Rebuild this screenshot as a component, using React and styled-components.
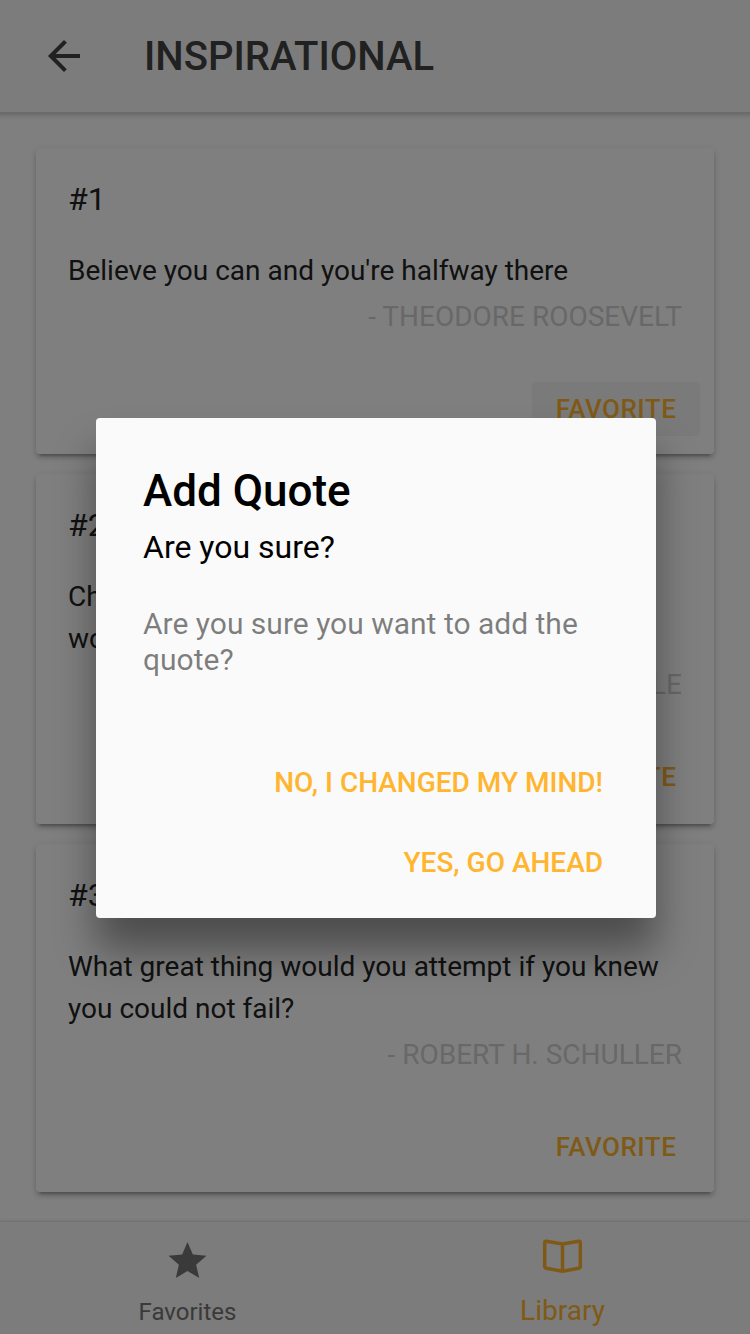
import React from "react";
import styled, { createGlobalStyle } from "styled-components";

const GlobalStyle = createGlobalStyle`
  * { box-sizing: border-box; }
  html, body { margin: 0; padding: 0; overflow: hidden; }
  body { font-family: Roboto, "Liberation Sans", sans-serif; background: #fff; color: #000; }
  h1, h2, h3, p { margin: 0; font-weight: 400; }
`;

const Screen = styled.div`
  position: relative;
  display: flex;
  flex-direction: column;
  width: 750px;
  height: 1334px;
  overflow: hidden;
`;

const Header = styled.header`
  position: relative;
  display: flex;
  align-items: center;
  flex: none;
  height: 112px;
  padding: 0 40px;
  gap: 56px;
  background: #f8f8f8;
  color: #424242;

  &::after {
    content: "";
    position: absolute;
    left: 0;
    right: 0;
    top: 100%;
    height: 8px;
    background: linear-gradient(rgba(0, 0, 0, 0.17), rgba(0, 0, 0, 0.14) 25%, rgba(0, 0, 0, 0.05) 60%, transparent);
  }
`;

const BackButton = styled.button`
  display: flex;
  width: 48px;
  height: 48px;
  padding: 0;
  border: 0;
  background: none;
  color: inherit;
`;

const PageTitle = styled.h1`
  padding-top: 2px;
  font-size: 40px;
  line-height: 48px;
  font-weight: 500;
  text-transform: uppercase;
`;

const Content = styled.main`
  flex: 1;
  min-height: 0;
  display: flex;
  flex-direction: column;
  gap: 20px;
  padding: 36px 36px 0;
`;

const Card = styled.article`
  display: flex;
  flex-direction: column;
  flex: none;
  height: ${(p) => p.$height}px;
  padding: 32px 14px 0 32px;
  border-radius: 4px;
  background: #fff;
  box-shadow: 0 4px 4px 0 rgba(0, 0, 0, 0.14), 0 6px 2px -4px rgba(0, 0, 0, 0.2),
    0 2px 10px 0 rgba(0, 0, 0, 0.12);
`;

const CardTitle = styled.h2`
  font-size: 32px;
  line-height: 38px;
  color: #222;
`;

const Quote = styled.p`
  margin: 32px 18px 0 0;
  font-size: 28px;
  line-height: 42px;
  color: #222;
`;

const Author = styled.p`
  margin: 4px 18px 0 0;
  font-size: 28px;
  line-height: 42px;
  text-align: right;
  text-transform: uppercase;
  color: #d1d1d1;
`;

const FavoriteButton = styled.button`
  align-self: flex-end;
  width: 168px;
  height: 54px;
  margin-top: 44px;
  padding: 0;
  border: 0;
  border-radius: 4px;
  font: 500 26px/54px Roboto, sans-serif;
  letter-spacing: 0.5px;
  text-transform: uppercase;
  color: #ffb52e;
  background: ${(p) => (p.$pressed ? "rgba(158, 158, 158, 0.1)" : "transparent")};
`;

const TabBar = styled.nav`
  display: flex;
  flex: none;
  height: 113px;
  background: #f8f8f8;
  border-top: 1px solid #e4e4e4;
  box-shadow: 0 -1px 3px rgba(0, 0, 0, 0.08);
`;

const Tab = styled.a`
  flex: 1;
  display: flex;
  flex-direction: column;
  align-items: center;
  padding-top: ${(p) => (p.$active ? 10 : 14)}px;
  gap: ${(p) => (p.$active ? 17 : 14)}px;
  color: ${(p) => (p.$active ? "#ffb52e" : "#747474")};
`;

const TabLabel = styled.span`
  font-size: ${(p) => (p.$active ? 28 : 24)}px;
  line-height: 28px;
`;

const Backdrop = styled.div`
  position: absolute;
  inset: 0;
  z-index: 2;
  display: flex;
  align-items: center;
  justify-content: center;
  background: rgba(0, 0, 0, 0.5);
`;

const Dialog = styled.section`
  width: 560px;
  height: 500px;
  margin: 2px 0 0 2px;
  border-radius: 4px;
  background: #fafafa;
  box-shadow: 0 32px 40px rgba(0, 0, 0, 0.4);
  display: flex;
  flex-direction: column;
  padding: 46px 48px 19px 47px;
`;

const DialogTitle = styled.h2`
  font-size: 44px;
  line-height: 54px;
  font-weight: 500;
`;

const DialogSubtitle = styled.h3`
  margin-top: 10px;
  font-size: 32px;
  line-height: 38px;
`;

const Message = styled.p`
  margin-top: 40px;
  font-size: 30px;
  line-height: 36px;
  color: rgba(0, 0, 0, 0.5);
`;

const Actions = styled.div`
  display: flex;
  flex-direction: column;
  align-items: flex-end;
  gap: 8px;
  margin-top: auto;
`;

const Action = styled.button`
  height: 72px;
  padding: 0 5px;
  border: 0;
  background: none;
  font: 500 28px/72px Roboto, sans-serif;
  text-transform: uppercase;
  color: #ffb52e;
`;

const Icon = ({ children, width = 48, viewBox = "0 0 512 512" }) => (
  <svg width={width} height={48} viewBox={viewBox} fill="currentColor">
    {children}
  </svg>
);

const quotes = [
  { text: "Believe you can and you're halfway there", by: "Theodore Roosevelt", height: 306, pressed: true },
  { text: "Change your thoughts and you change your world.", by: "Norman Vincent Peale", height: 350 },
  { text: "What great thing would you attempt if you knew you could not fail?", by: "Robert H. Schuller", height: 348 },
];

export default function App() {
  return (
    <Screen>
      <GlobalStyle />
      <Header>
        <BackButton aria-label="Back">
          <Icon>
            <path d="M427 234.625H167.296l119.702-119.702L256 85 85 256l171 171 29.922-29.924-118.626-119.701H427v-42.75z" />
          </Icon>
        </BackButton>
        <PageTitle>Inspirational</PageTitle>
      </Header>
      <Content>
        {quotes.map((q, i) => (
          <Card key={q.by} $height={q.height}>
            <CardTitle>#{i + 1}</CardTitle>
            <Quote>{q.text}</Quote>
            <Author>- {q.by}</Author>
            <FavoriteButton $pressed={q.pressed}>Favorite</FavoriteButton>
          </Card>
        ))}
      </Content>
      <TabBar>
        <Tab>
          <Icon width={49}>
            <path d="M256 372.686L380.83 448l-33.021-142.066L458 210.409l-145.267-12.475L256 64l-56.743 133.934L54 210.409l110.192 95.525L131.161 448z" />
          </Icon>
          <TabLabel>Favorites</TabLabel>
        </Tab>
        <Tab $active>
          <Icon width={49} viewBox="0 0 48 48">
            <path
              d="M24 12L7.8 9.2Q6.2 9 6.2 10.5V34.5Q6.2 36 7.8 36.3L24 39.2L40.2 36.3Q41.8 36 41.8 34.5V10.5Q41.8 9 40.2 9.2ZV39"
              fill="none"
              stroke="currentColor"
              strokeWidth="3.5"
              strokeLinejoin="round"
            />
          </Icon>
          <TabLabel $active>Library</TabLabel>
        </Tab>
      </TabBar>
      <Backdrop>
        <Dialog role="dialog" aria-label="Add Quote">
          <DialogTitle>Add Quote</DialogTitle>
          <DialogSubtitle>Are you sure?</DialogSubtitle>
          <Message>Are you sure you want to add the quote?</Message>
          <Actions>
            <Action>No, I changed my mind!</Action>
            <Action>Yes, go ahead</Action>
          </Actions>
        </Dialog>
      </Backdrop>
    </Screen>
  );
}
